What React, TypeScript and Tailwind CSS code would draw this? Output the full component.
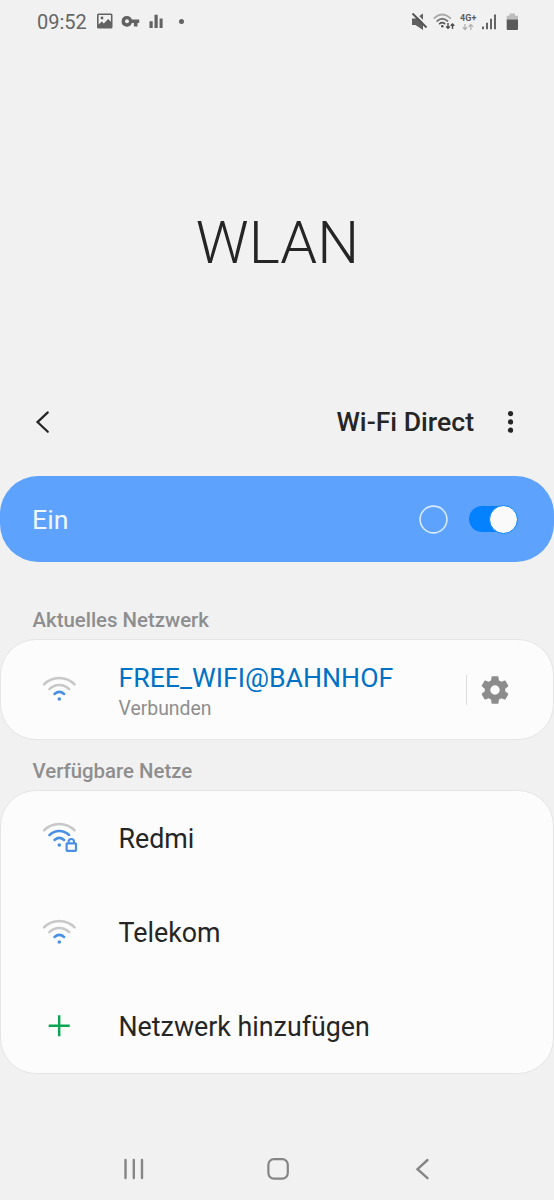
import type { ReactNode } from "react";
import { clsx } from "clsx";

type WifiIconProps = {
  level: 1 | 2;
  locked?: boolean;
};

function WifiIcon({ level, locked }: WifiIconProps) {
  return (
    <svg
      className={clsx(locked ? "mb-1" : "mt-px")}
      width="38"
      height="34"
      viewBox="0 0 38 34"
      fill="none"
      strokeWidth="2.5"
      strokeLinecap="round"
    >
      <path d="M3 11.3A21.5 21.5 0 0 1 33.6 11.3" stroke="#c8c8c8" />
      <path d="M8.4 16.2A13.8 13.8 0 0 1 28.2 16.2" stroke={level > 1 ? "#4a90e2" : "#c8c8c8"} />
      <path d="M13.5 21Q18.3 16.8 23.1 21" stroke="#4a90e2" />
      <circle cx="18.3" cy="26" r="1.8" fill="#4a90e2" />
      {locked && (
        <g>
          <path d="M23.5 22.5h12.5v11h-12.5zM26 24v-3.5a3.8 3.8 0 0 1 7.6 0V24z" fill="#fcfcfc" />
          <rect x="25.6" y="24.3" width="9.4" height="7.6" rx="0.8" stroke="#4a90e2" strokeWidth="2.2" />
          <path d="M27.6 24v-1.4a2.7 2.7 0 0 1 5.4 0v1.4" stroke="#4a90e2" strokeWidth="2" />
        </g>
      )}
    </svg>
  );
}

function StatusBar() {
  return (
    <div className="flex h-11 items-center justify-between pl-[37px] pr-[35px] text-[#666]">
      <div className="flex items-center">
        <span className="w-[60px] text-[20px] leading-5">09:52</span>
        <svg width="90" height="20" viewBox="97 11.5 90 20" fill="#626262">
          <path
            fillRule="evenodd"
            d="M98.5 13h12.5a1.5 1.5 0 0 1 1.5 1.5v12a1.5 1.5 0 0 1-1.5 1.5h-12.5a1.5 1.5 0 0 1-1.5-1.5v-12a1.5 1.5 0 0 1 1.5-1.5zM98.6 14.6v9.5l3.2-3 2 1.8 4.3-4.5 2.8 2.9v-6.7z"
          />
          <circle cx="102" cy="17.5" r="1.4" />
          <path
            fillRule="evenodd"
            d="M127 15.5a5.3 5.3 0 0 1 4.9 3.5h7.3v3.6h-1.7v3.3h-3.6v-3.3h-2a5.3 5.3 0 1 1-4.9-7.1zM127 18.8a2 2 0 1 0 0 4 2 2 0 0 0 0-4z"
          />
          <path d="M149.5 20.8h3.2v6.7h-3.2zM154.5 14.3h3.2v13.2h-3.2zM159.6 18h3v9.5h-3z" />
          <circle cx="181.5" cy="20.9" r="2.5" />
        </svg>
      </div>
      <svg width="108" height="24" viewBox="411 9 108 24" fill="none">
        <path d="M412 17.5h3.5l7.5-5v16.5l-7.5-5h-3.5z" fill="#5f5f5f" />
        <path d="M414 11.2l14 14" stroke="#f1f1f1" strokeWidth="2" />
        <path d="M412.5 12.5l14 14" stroke="#555" strokeWidth="2" />
        <g strokeLinecap="round" strokeWidth="1.8">
          <path d="M434.3 17.2Q442.2 9.8 450.3 17.2" stroke="#aaa" />
          <path d="M437.2 20Q442.3 15.5 447.5 20" stroke="#777" />
          <path d="M439.7 22.6Q442.2 20.6 444.6 22.6" stroke="#555" />
        </g>
        <circle cx="442.3" cy="25.3" r="1.2" fill="#444" />
        <path
          d="M448 22v5M446.2 25.5l1.8 1.8 1.8-1.8M452.5 28v-5M450.7 24.7l1.8-1.8 1.8 1.8"
          stroke="#4d4d4d"
          strokeWidth="1.4"
        />
        <text x="460" y="20.3" fill="#5d5d5d" fontSize="9" fontWeight="700" textLength="16.5">
          4G+
        </text>
        <path
          d="M465 23v5.5M462.9 26.3l2.1 2.2 2.1-2.2M470.8 29v-5.5M468.7 25.7l2.1-2.2 2.1 2.2"
          stroke="#b2b2b2"
          strokeWidth="1.3"
        />
        <path d="M483 25.5v2.7M487 21.8v6.4M491 17.7v10.5M495 13.4v14.8" stroke="#646464" strokeWidth="2" />
        <path d="M509.5 12.5h5.5v2.2h3v4h-11.3v-4h2.8z" fill="#bdbdbd" />
        <path d="M506.7 18.5H518v9.5a1 1 0 0 1-1 1h-9.3a1 1 0 0 1-1-1z" fill="#5a5a5a" />
      </svg>
    </div>
  );
}

function ActionBar() {
  return (
    <div className="flex h-14 items-center pl-[34px] pr-[38px] text-[#252525]">
      <svg width="18" height="24" viewBox="0 0 18 24" fill="none" stroke="currentColor" strokeWidth="2.2">
        <path d="M13.8 2.4L3.5 12.1l10.3 9.7" strokeLinecap="round" />
      </svg>
      <span className="ml-auto text-[26.6px] font-medium leading-8">Wi-Fi Direct</span>
      <svg className="ml-[31px]" width="11" height="24" viewBox="0 0 11 24" fill="currentColor">
        <circle cx="5.5" cy="3.6" r="2.6" />
        <circle cx="5.5" cy="11.9" r="2.6" />
        <circle cx="5.5" cy="20.2" r="2.6" />
      </svg>
    </div>
  );
}

function MasterSwitch() {
  return (
    <div className="flex h-[86px] items-center rounded-[38px] bg-[#5da3fd] pl-8 pr-[37px]">
      <span className="pt-0.5 text-[26.7px] leading-8 text-[#f0f7ff]">Ein</span>
      <svg className="ml-auto" width="29" height="29" viewBox="0 0 29 29" fill="none">
        <circle cx="14.5" cy="14.5" r="13.4" stroke="#d7eaff" strokeWidth="1.6" />
      </svg>
      <span className="ml-[21px] flex h-[26px] w-12 items-center justify-end rounded-full bg-[#0381fe]">
        <span className="-mr-px size-[29px] shrink-0 rounded-full border border-[#0381fe] bg-[#fafafa]" />
      </span>
    </div>
  );
}

function SectionTitle({ children }: { children: ReactNode }) {
  return <h2 className="pl-[32.5px] text-[20.4px] font-medium leading-6 text-[#8e8e8e]">{children}</h2>;
}

function NetworkRow({ icon, name }: { icon: ReactNode; name: string }) {
  return (
    <div className="flex flex-1 items-center pl-10">
      <span className="w-[77.5px]">{icon}</span>
      <span className="pt-px text-[26.8px] leading-8 text-[#252525]">{name}</span>
    </div>
  );
}

const cardClass = "border border-[#e5e5e5] bg-[#fcfcfc] rounded-[36px]";

export default function App() {
  return (
    <div className="flex h-[1200px] w-[554px] flex-col overflow-hidden bg-[#f1f1f1] font-['Roboto',sans-serif]">
      <StatusBar />

      <div className="flex h-[350px] justify-center pl-px pt-[164px]">
        <h1 className="text-[59px] font-light leading-[70px] text-[#252525]">WLAN</h1>
      </div>

      <ActionBar />

      <div className="mt-[26px]">
        <MasterSwitch />
      </div>

      <div className="mt-[46px]">
        <SectionTitle>Aktuelles Netzwerk</SectionTitle>
      </div>
      <div className={clsx(cardClass, "mt-[7px] flex h-[101px] items-center pl-10 pr-[43px]")}>
        <span className="w-[77.5px]">
          <WifiIcon level={1} />
        </span>
        <div className="flex flex-col pt-1.5">
          <span className="text-[26.7px] leading-8 text-[#0072c6]">FREE_WIFI@BAHNHOF</span>
          <span className="text-[19.4px] leading-[30px] text-[#8e8e8e]">Verbunden</span>
        </div>
        <span className="ml-auto mr-[13px] h-[30px] w-px bg-[#dedede]" />
        <svg width="30" height="32" viewBox="1.5 1.3 21 21.4" fill="#8c8c8c">
          <path d="M19.14 12.94c.04-.3.06-.61.06-.94s-.02-.64-.07-.94l2.03-1.58c.18-.14.23-.41.12-.61l-1.92-3.32c-.12-.22-.37-.29-.59-.22l-2.39.96c-.5-.38-1.03-.7-1.62-.94l-.36-2.54c-.04-.24-.24-.41-.48-.41h-3.84c-.24 0-.43.17-.47.41l-.36 2.54c-.59.24-1.13.57-1.62.94l-2.39-.96c-.22-.08-.47 0-.59.22L2.74 8.87c-.12.21-.08.47.12.61l2.03 1.58c-.05.3-.09.63-.09.94s.02.64.07.94l-2.03 1.58c-.18.14-.23.41-.12.61l1.92 3.32c.12.22.37.29.59.22l2.39-.96c.5.38 1.03.7 1.62.94l.36 2.54c.05.24.24.41.48.41h3.84c.24 0 .44-.17.47-.41l.36-2.54c.59-.24 1.13-.56 1.62-.94l2.39.96c.22.08.47 0 .59-.22l1.92-3.32c.12-.22.07-.47-.12-.61l-2.01-1.58zM12 15.3a3.3 3.3 0 1 1 0-6.6 3.3 3.3 0 0 1 0 6.6z" />
        </svg>
      </div>

      <div className="mt-[19px]">
        <SectionTitle>Verfügbare Netze</SectionTitle>
      </div>
      <div className={clsx(cardClass, "mt-[7px] flex h-[284px] flex-col")}>
        <NetworkRow icon={<WifiIcon level={2} locked />} name="Redmi" />
        <NetworkRow icon={<WifiIcon level={1} />} name="Telekom" />
        <NetworkRow
          icon={
            <svg width="38" height="24" viewBox="0 0 38 24" stroke="#0ba553" strokeWidth="2.4">
              <path d="M7.7 11.7h21M18.2 1.2v21" />
            </svg>
          }
          name="Netzwerk hinzufügen"
        />
      </div>

      <div className="mt-auto flex h-[62px] items-center justify-between pl-[122px] pr-[119px] text-[#858585]">
        <svg width="24" height="24" viewBox="0 0 24 24" stroke="currentColor" strokeWidth="2.4" strokeLinecap="round">
          <path d="M3.5 3v18M11.8 3v18M20 3v18" />
        </svg>
        <svg width="24" height="24" viewBox="0 0 24 24" fill="none" stroke="currentColor" strokeWidth="2.2">
          <rect x="1.4" y="2.2" width="19.4" height="19.4" rx="5.5" />
        </svg>
        <svg width="24" height="24" viewBox="0 0 24 24" fill="none" stroke="currentColor" strokeWidth="2.4" strokeLinecap="round">
          <path d="M16.5 3L6.5 12.2l10 9" />
        </svg>
      </div>
    </div>
  );
}
